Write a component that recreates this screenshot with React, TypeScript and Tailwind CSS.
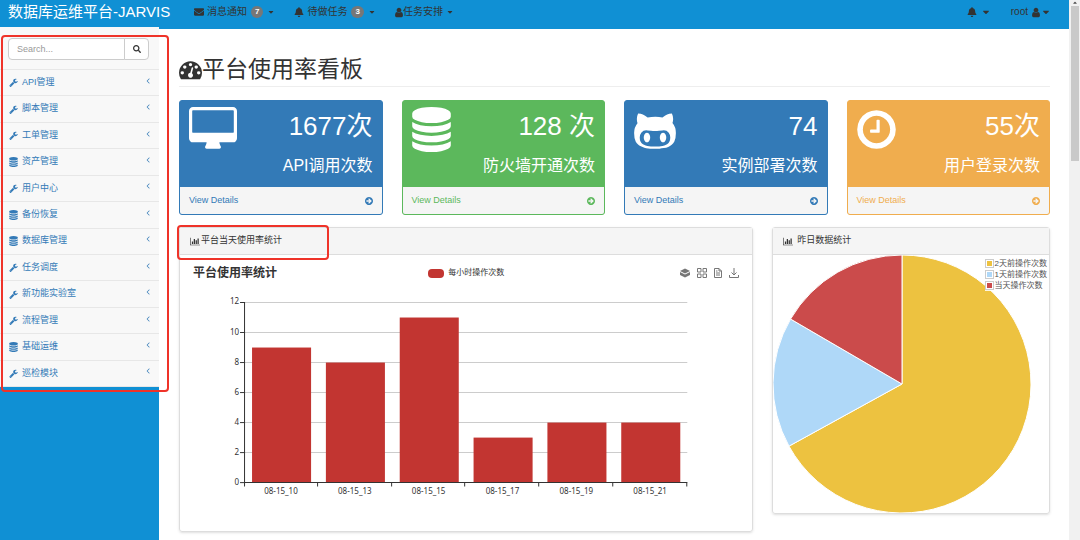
import { useState } from "react";
import type { ReactNode } from "react";
import { FaBell, FaCaretDown, FaEnvelope, FaSearch } from "react-icons/fa";

type IconProps = { className?: string };

function DatabaseIcon({ className }: IconProps) {
  return (
    <svg className={className} viewBox="128 0 1536 1792" fill="currentColor" aria-hidden="true">
      <path d="M896 768q237 0 443-43t325-127v170q0 69-103 128t-280 93.5-385 34.5-385-34.5-280-93.5-103-128v-170q119 84 325 127t443 43zm0 768q237 0 443-43t325-127v170q0 69-103 128t-280 93.5-385 34.5-385-34.5-280-93.5-103-128v-170q119 84 325 127t443 43zm0-384q237 0 443-43t325-127v170q0 69-103 128t-280 93.5-385 34.5-385-34.5-280-93.5-103-128v-170q119 84 325 127t443 43zm0-1152q208 0 385 34.5t280 93.5 103 128v128q0 69-103 128t-280 93.5-385 34.5-385-34.5-280-93.5-103-128v-128q0-69 103-128t280-93.5 385-34.5z" />
    </svg>
  );
}

function DesktopIcon({ className }: IconProps) {
  return (
    <svg className={className} viewBox="-64 0 1920 1792" fill="currentColor" aria-hidden="true">
      <path d="M1728 992v-832q0-13-9.5-22.5t-22.5-9.5h-1600q-13 0-22.5 9.5t-9.5 22.5v832q0 13 9.5 22.5t22.5 9.5h1600q13 0 22.5-9.5t9.5-22.5zm128-832v1088q0 66-47 113t-113 47h-544q0 37 16 77.5t32 71 16 43.5q0 26-19 45t-45 19h-512q-26 0-45-19t-19-45q0-14 16-44t32-70 16-78h-544q-66 0-113-47t-47-113v-1088q0-66 47-113t113-47h1600q66 0 113 47t47 113z" />
    </svg>
  );
}

function GithubIcon({ className }: IconProps) {
  return (
    <svg className={className} viewBox="0 0 1664 1792" fill="currentColor" aria-hidden="true">
      <path d="M640 1216q0 40-12.5 82t-43 76-72.5 34-72.5-34-43-76-12.5-82 12.5-82 43-76 72.5-34 72.5 34 43 76 12.5 82zm640 0q0 40-12.5 82t-43 76-72.5 34-72.5-34-43-76-12.5-82 12.5-82 43-76 72.5-34 72.5 34 43 76 12.5 82zm160 0q0-120-69-204t-187-84q-41 0-195 21-71 11-157 11t-157-11q-152-21-195-21-118 0-187 84t-69 204q0 88 32 153.5t81 103 122 60 140 29.5 149 7h168q82 0 149-7t140-29.5 122-60 81-103 32-153.5zm224-176q0 207-61 331-38 77-105.5 133t-141 86-170 47.5-171.5 22-167 4.5q-78 0-142-3t-147.5-12.5-152.5-30-137-51.5-121-81-86-115q-62-123-62-331 0-237 136-396-27-82-27-170 0-116 51-218 108 0 190 39.5t189 123.5q147-35 309-35 148 0 280 32 105-82 187-121t189-39q51 102 51 218 0 87-27 168 136 160 136 398z" />
    </svg>
  );
}

function ClockIcon({ className }: IconProps) {
  return (
    <svg className={className} viewBox="128 0 1536 1792" fill="currentColor" aria-hidden="true">
      <path d="M1024 544v448q0 14-9 23t-23 9h-320q-14 0-23-9t-9-23v-64q0-14 9-23t23-9h224v-352q0-14 9-23t23-9h64q14 0 23 9t9 23zm416 352q0-148-73-273t-198-198-273-73-273 73-198 198-73 273 73 273 198 198 273 73 273-73 198-198 73-273zm224 0q0 209-103 385.5t-279.5 279.5-385.5 103-385.5-103-279.5-279.5-103-385.5 103-385.5 279.5-279.5 385.5-103 385.5 103 279.5 279.5 103 385.5z" />
    </svg>
  );
}

function DashboardIcon({ className }: IconProps) {
  return (
    <svg className={className} viewBox="0 0 1792 1792" fill="currentColor" aria-hidden="true">
      <path d="M384 1152q0-53-37.5-90.5t-90.5-37.5-90.5 37.5-37.5 90.5 37.5 90.5 90.5 37.5 90.5-37.5 37.5-90.5zm192-448q0-53-37.5-90.5t-90.5-37.5-90.5 37.5-37.5 90.5 37.5 90.5 90.5 37.5 90.5-37.5 37.5-90.5zm428 481l101-382q6-26-7.5-48.5t-38.5-29.5-48 6.5-30 39.5l-101 382q-60 5-107 43.5t-63 98.5q-20 77 20 146t117 89 146-20 89-117q16-60-6-117t-72-91zm660-33q0-53-37.5-90.5t-90.5-37.5-90.5 37.5-37.5 90.5 37.5 90.5 90.5 37.5 90.5-37.5 37.5-90.5zm-640-640q0-53-37.5-90.5t-90.5-37.5-90.5 37.5-37.5 90.5 37.5 90.5 90.5 37.5 90.5-37.5 37.5-90.5zm448 192q0-53-37.5-90.5t-90.5-37.5-90.5 37.5-37.5 90.5 37.5 90.5 90.5 37.5 90.5-37.5 37.5-90.5zm320 448q0 261-141 483-19 29-54 29h-1402q-35 0-54-29-141-221-141-483 0-182 71-348t191-286 286-191 348-71 348 71 286 191 191 286 71 348z" />
    </svg>
  );
}

function BarChartIcon({ className }: IconProps) {
  return (
    <svg className={className} viewBox="0 0 2048 1792" fill="currentColor" aria-hidden="true">
      <path d="M640 896v512h-256v-512h256zm384-512v1024h-256v-1024h256zm1024 1152v128h-2048v-1536h128v1408h1920zm-640-896v768h-256v-768h256zm384-384v1152h-256v-1152h256z" />
    </svg>
  );
}

function UserIcon({ className }: IconProps) {
  return (
    <svg className={className} viewBox="256 0 1280 1792" fill="currentColor" aria-hidden="true">
      <path d="M1536 1399q0 109-62.5 187t-150.5 78h-854q-88 0-150.5-78t-62.5-187q0-85 8.5-160.5t31.5-152 58.5-131 94-89 134.5-34.5q131 128 313 128t313-128q76 0 134.5 34.5t94 89 58.5 131 31.5 152 8.5 160.5zm-256-887q0 159-112.5 271.5t-271.5 112.5-271.5-112.5-112.5-271.5 112.5-271.5 271.5-112.5 271.5 112.5 112.5 271.5z" />
    </svg>
  );
}

function WrenchIcon({ className }: IconProps) {
  return (
    <svg className={className} viewBox="0 0 1792 1792" fill="currentColor" aria-hidden="true">
      <path d="M448 1472q0-26-19-45t-45-19-45 19-19 45 19 45 45 19 45-19 19-45zm644-420l-682 682q-37 37-90 37-52 0-91-37l-106-108q-38-36-38-90 0-53 38-91l681-681q39 98 114.5 173.5t173.5 114.5zm634-435q0 39-23 106-47 134-164.5 217.5t-258.5 83.5q-185 0-316.5-131.5t-131.5-316.5 131.5-316.5 316.5-131.5q58 0 121.5 16.5t107.5 46.5q16 11 16 28t-16 28l-293 169v224l193 107q5-3 79-48.5t135.5-81 70.5-35.5q15 0 23.5 10t8.5 25z" />
    </svg>
  );
}

function ArrowCircleIcon({ className }: IconProps) {
  return (
    <svg className={className} viewBox="128 128 1536 1536" fill="currentColor" aria-hidden="true">
      <path d="M1413 896q0-27-18-45l-91-91-362-362q-18-18-45-18t-45 18l-91 91q-18 18-18 45t18 45l189 189h-502q-26 0-45 19t-19 45v128q0 26 19 45t45 19h502l-189 189q-18 18-18 45t18 45l91 91q18 18 45 18t45-18l362-362 91-91q18-18 18-45zm251 0q0 209-103 385.5t-279.5 279.5-385.5 103-385.5-103-279.5-279.5-103-385.5 103-385.5 279.5-279.5 385.5-103 385.5 103 279.5 279.5 103 385.5z" />
    </svg>
  );
}

function AngleLeftIcon({ className }: IconProps) {
  return (
    <svg className={className} viewBox="576 384 640 1152" fill="currentColor" aria-hidden="true">
      <path d="M1203 544q0 13-10 23l-393 393 393 393q10 10 10 23t-10 23l-50 50q-10 10-23 10t-23-10l-466-466q-10-10-10-23t10-23l466-466q10-10 23-10t23 10l50 50q10 10 10 23z" />
    </svg>
  );
}

const menu = [
  { name: "API管理", db: false },
  { name: "脚本管理", db: false },
  { name: "工单管理", db: false },
  { name: "资产管理", db: true },
  { name: "用户中心", db: false },
  { name: "备份恢复", db: true },
  { name: "数据库管理", db: true },
  { name: "任务调度", db: false },
  { name: "新功能实验室", db: false },
  { name: "流程管理", db: false },
  { name: "基础运维", db: true },
  { name: "巡检模块", db: false }
];

const cards = [
  {
    value: "1677次",
    label: "API调用次数",
    icon: <DesktopIcon className="h-[45px] w-12" />,
    box: "border-[#337ab7] bg-[#337ab7]",
    link: "text-[#337ab7]"
  },
  {
    value: "128 次",
    label: "防火墙开通次数",
    icon: <DatabaseIcon className="h-[45px] w-[39px]" />,
    box: "border-[#5cb85c] bg-[#5cb85c]",
    link: "text-[#5cb85c]"
  },
  {
    value: "74",
    label: "实例部署次数",
    icon: <GithubIcon className="h-[45px] w-[42px]" />,
    box: "border-[#337ab7] bg-[#337ab7]",
    link: "text-[#337ab7]"
  },
  {
    value: "55次",
    label: "用户登录次数",
    icon: <ClockIcon className="h-[45px] w-[39px]" />,
    box: "border-[#f0ad4e] bg-[#f0ad4e]",
    link: "text-[#f0ad4e]"
  }
];

const hours = [
  { hour: "08-15_10", count: 9 },
  { hour: "08-15_13", count: 8 },
  { hour: "08-15_15", count: 11 },
  { hour: "08-15_17", count: 3 },
  { hour: "08-15_19", count: 4 },
  { hour: "08-15_21", count: 4 }
];

const days = [
  { label: "2天前操作次数", percent: 67, color: "#edc240", swatch: "bg-[#edc240]" },
  { label: "1天前操作次数", percent: 16.4, color: "#afd8f8", swatch: "bg-[#afd8f8]" },
  { label: "当天操作次数", percent: 16.6, color: "#cb4b4b", swatch: "bg-[#cb4b4b]" }
];

function Badge({ children }: { children: ReactNode }) {
  return (
    <span className="ml-1 rounded-full bg-[#777777] px-1 text-[8px] font-bold leading-[12px] text-white">
      {children}
    </span>
  );
}

function Navbar() {
  return (
    <header className="flex h-[27px] items-start bg-[#1090d4] text-[10px] leading-6 text-[#333333]">
      <a href="#" className="w-[194px] pl-2 text-[15px] text-white">数据库运维平台-JARVIS</a>
      <nav className="flex flex-1 items-center gap-[19px]">
        <button type="button" className="flex items-center">
          <FaEnvelope className="mr-[3px] size-[10px]" />
          消息通知
          <Badge>7</Badge>
          <FaCaretDown className="ml-1 size-2" />
        </button>
        <button type="button" className="flex items-center">
          <FaBell className="mr-[3px] size-[10px]" />
          待做任务
          <Badge>3</Badge>
          <FaCaretDown className="ml-1 size-2" />
        </button>
        <button type="button" className="flex items-center">
          <UserIcon className="h-[11px] w-2" />
          任务安排
          <FaCaretDown className="ml-[3px] size-2" />
        </button>
      </nav>
      <div className="flex items-center gap-5 pr-[18px]">
        <button type="button" aria-label="通知" className="flex h-6 items-center">
          <FaBell className="size-[10px]" />
          <FaCaretDown className="ml-1 size-[10px]" />
        </button>
        <button type="button" className="flex items-center">
          root
          <UserIcon className="ml-1 h-[11px] w-2" />
          <FaCaretDown className="ml-px size-[10px]" />
        </button>
      </div>
    </header>
  );
}

function Sidebar() {
  const [search, setSearch] = useState("");

  return (
    <aside className="relative w-[159px] shrink-0 self-start bg-[#f8f8f8] text-[9px] text-[#337ab7]">
      <form className="flex px-2 pb-[9px] pt-[11px]" onSubmit={e => e.preventDefault()}>
        <input
          type="text"
          aria-label="Search"
          placeholder="Search..."
          value={search}
          onChange={e => setSearch(e.target.value)}
          className="h-[22px] min-w-0 flex-1 rounded-l-sm border border-[#cccccc] bg-white px-2 text-[#333333] outline-none placeholder:text-[#999999]"
        />
        <button
          type="submit"
          aria-label="Search"
          className="-ml-px mr-0.5 flex w-[25px] items-center justify-center rounded-r-sm border border-[#cccccc] bg-white text-[#333333]"
        >
          <FaSearch className="size-2" />
        </button>
      </form>
      <ul className="flex h-[318px] flex-col border-t border-[#e7e7e7]">
        {menu.map(item => (
          <li key={item.name} className="flex-1 border-b border-[#e7e7e7]">
            <a href="#" className="flex h-full items-center pl-[9px] pr-[9px]">
              {item.db ? <DatabaseIcon className="mr-1 h-[10px] w-[9px]" /> : <WrenchIcon className="mr-1 size-[9px]" />}
              <span className="flex-1">{item.name}</span>
              <AngleLeftIcon className="mb-1 h-[6px] w-1" />
            </a>
          </li>
        ))}
      </ul>
      {/* marco rojo del menú */}
      <div className="pointer-events-none absolute -bottom-[5px] -right-[10px] left-px top-2 rounded-sm border-2 border-[#ef3329]" />
    </aside>
  );
}

function HourChart() {
  const left = 64;
  const bottom = 201.5;
  const step = 73.8;

  return (
    <svg
      viewBox="0 1 572 249"
      className="w-full font-['Noto_Sans',sans-serif]"
      role="img"
      aria-label="平台使用率统计"
      fontSize="8"
      fill="#333333"
    >
      {[0, 2, 4, 6, 8, 10, 12].map(n => (
        <g key={n}>
          <path d={`M${left} ${bottom - n * 15}H507`} stroke="#cccccc" />
          <path d={`M${left - 4} ${bottom - n * 15}h5`} stroke="#333333" />
          <text x={left - 5} y={bottom - n * 15 + 2} textAnchor="end">{n}</text>
        </g>
      ))}
      {hours.map((h, i) => (
        <g key={h.hour}>
          <rect x={left + i * step + 8} y={bottom - h.count * 15} width="59" height={h.count * 15} fill="#c23531" />
          <path d={`M${Math.round(left + (i + 1) * step) - 0.5} ${bottom}v4`} stroke="#333333" />
          <text x={left + i * step + step / 2} y={bottom + 11} textAnchor="middle">{h.hour}</text>
        </g>
      ))}
      <path d={`M${left + 0.5} 21V${bottom + 4}M${left} ${bottom}H507`} stroke="#333333" fill="none" />
    </svg>
  );
}

function Toolbox() {
  return (
    <div className="flex justify-end gap-[7px] text-[#777777]">
      <button type="button" aria-label="堆叠">
        <svg viewBox="0 0 20 20" className="size-[10px]" fill="currentColor">
          <path d="M10 1 20 6 10 11 0 6z" />
          <path d="M0 8l10 5 10-5v6l-10 5-10-5z" />
        </svg>
      </button>
      <button type="button" aria-label="平铺">
        <svg viewBox="0 0 20 20" className="size-[10px]" fill="none" stroke="currentColor" strokeWidth="2">
          <path d="M1 1h7v7H1zM12 1h7v7h-7zM1 12h7v7H1zM12 12h7v7h-7z" />
        </svg>
      </button>
      <button type="button" aria-label="数据视图">
        <svg viewBox="0 0 16 20" className="h-[10px] w-2" fill="none" stroke="currentColor" strokeWidth="2">
          <path d="M1 1h9l5 5v13H1zM10 1v5h5M4 10h8M4 14h8M4 6h3" />
        </svg>
      </button>
      <button type="button" aria-label="保存为图片">
        <svg viewBox="0 0 20 20" className="size-[10px]" fill="none" stroke="currentColor" strokeWidth="2">
          <path d="M10 0v14M5 9l5 5 5-5M1 14v5h18v-5" />
        </svg>
      </button>
    </div>
  );
}

function DayPie() {
  const r = 129;
  const point = (percent: number) => {
    const angle = (percent / 100) * Math.PI * 2;
    return `${r + r * Math.sin(angle)} ${r - r * Math.cos(angle)}`;
  };
  let total = 0;

  return (
    <svg viewBox="0 0 258 258" className="w-[258px] max-w-full" role="img" aria-label="昨日数据统计">
      {days.map(d => {
        const start = total;
        total += d.percent;
        return (
          <path
            key={d.label}
            d={`M${r} ${r}L${point(start)}A${r} ${r} 0 ${d.percent > 50 ? 1 : 0} 1 ${point(total)}z`}
            fill={d.color}
            stroke="#ffffff"
          />
        );
      })}
    </svg>
  );
}

function PanelHeading({ children }: { children: ReactNode }) {
  return (
    <h2 className="flex h-[27px] items-center border-b border-[#dddddd] bg-[#f5f5f5] px-[10px] text-[9px]">
      {children}
    </h2>
  );
}

export default function App() {
  return (
    <div className="flex min-h-screen bg-white font-['Liberation_Sans','Noto_Sans_CJK_SC',sans-serif] text-[#333333]">
      <div className="flex min-w-0 flex-1 flex-col bg-[#1090d4]">
        <Navbar />
        <div className="flex flex-1">
          <Sidebar />
          <main className="min-w-0 flex-1 border-t-2 border-[#1090d4] bg-white pb-2 pl-5 pr-[19px] pt-[26px]">
            <h1 className="mb-[13px] flex items-center border-b border-[#eeeeee] pb-[3px] text-[23px] leading-[28px]">
              <DashboardIcon className="size-[23px]" />
              平台使用率看板
            </h1>

            {/* Tarjetas de resumen */}
            <div className="mb-3 grid grid-cols-4 gap-[19px]">
              {cards.map(card => (
                <section key={card.label} className={`overflow-hidden rounded-[3px] border ${card.box}`}>
                  <div className="flex items-start justify-between px-[9px] pb-[11px] pt-1.5 text-white">
                    {card.icon}
                    <div className="text-right">
                      <div className="text-[26px] leading-[38px]">{card.value}</div>
                      <div className="mt-[11px] text-[16px] leading-5">{card.label}</div>
                    </div>
                  </div>
                  <a
                    href="#"
                    className={`flex h-[27px] items-center justify-between bg-[#f5f5f5] px-[9px] text-[9px] ${card.link}`}
                  >
                    View Details
                    <ArrowCircleIcon className="size-2" />
                  </a>
                </section>
              ))}
            </div>

            <div className="grid grid-cols-3 items-start gap-[19px]">
              <section className="relative col-span-2 rounded-[3px] border border-[#dddddd] shadow-sm">
                <PanelHeading>
                  <BarChartIcon className="mr-px h-[9px] w-[10px]" />
                  平台当天使用率统计
                </PanelHeading>
                <div className="grid grid-cols-3 items-center px-[13px] pt-[9px] leading-[18px]">
                  <h3 className="text-[12px] font-bold">平台使用率统计</h3>
                  <div className="flex items-center justify-center gap-1 text-[8px]">
                    <span className="h-[9px] w-4 rounded-sm bg-[#c23531]" />
                    每小时操作次数
                  </div>
                  <Toolbox />
                </div>
                <HourChart />
                {/* marco rojo del título */}
                <div className="pointer-events-none absolute -left-[3px] -top-[3px] h-[35px] w-[152px] rounded-sm border-2 border-[#ef3329]" />
              </section>

              <section className="relative rounded-[3px] border border-[#dddddd] shadow-sm">
                <PanelHeading>
                  <BarChartIcon className="mr-1 h-[9px] w-[10px]" />
                  昨日数据统计
                </PanelHeading>
                <DayPie />
                <ul className="absolute right-0.5 top-[30px] bg-white/85 text-[8px] leading-[11px] text-[#545454]">
                  {days.map(d => (
                    <li key={d.label} className="flex items-center gap-px">
                      <span className="border border-[#cccccc] bg-white p-px">
                        <span className={`block size-[5px] ${d.swatch}`} />
                      </span>
                      {d.label}
                    </li>
                  ))}
                </ul>
              </section>
            </div>
          </main>
        </div>
      </div>

      {/* Barra de desplazamiento */}
      <div className="flex w-[11px] flex-col items-center bg-[#f1f1f1]">
        <FaCaretDown className="size-1.5 rotate-180 text-[#505050]" />
        <div className="h-[155px] w-2 bg-[#c9c9c9]" />
      </div>
    </div>
  );
}
